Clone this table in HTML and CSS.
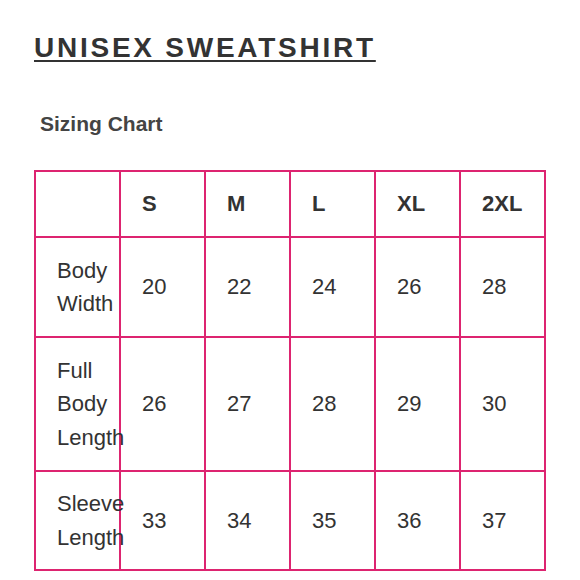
FILE: index.html
```html
<!DOCTYPE html>
<html>
<head>
<meta charset="utf-8">
<link rel="stylesheet" href="styles.css">
</head>
<body>
<div class="page">
  <h1 class="title">UNISEX SWEATSHIRT</h1>
  <h2 class="subtitle">Sizing Chart</h2>
  <table class="chart">
    <tr class="head">
      <td></td><td>S</td><td>M</td><td>L</td><td>XL</td><td>2XL</td>
    </tr>
    <tr class="r1">
      <td class="label">Body<br>Width</td><td>20</td><td>22</td><td>24</td><td>26</td><td>28</td>
    </tr>
    <tr class="r2">
      <td class="label">Full<br>Body<br>Length</td><td>26</td><td>27</td><td>28</td><td>29</td><td>30</td>
    </tr>
    <tr class="r3">
      <td class="label">Sleeve<br>Length</td><td>33</td><td>34</td><td>35</td><td>36</td><td>37</td>
    </tr>
  </table>
</div>
</body>
</html>
```

FILE: styles.css
```css
html, body {
  margin: 0;
  padding: 0;
  background: #ffffff;
}

.page {
  padding: 32px 0 0 34px;
  font-family: "Liberation Sans", Arial, sans-serif;
  color: #333333;
}

.title {
  margin: 0;
  font-size: 28px;
  line-height: 32px;
  font-weight: bold;
  letter-spacing: 2.75px;
  text-decoration: underline;
  text-decoration-thickness: 2px;
  text-underline-offset: 3px;
  color: #333333;
}

.subtitle {
  margin: 48px 0 0 6px;
  font-size: 21px;
  line-height: 24px;
  font-weight: bold;
  color: #444444;
}

.chart {
  margin-top: 34px;
  border-collapse: collapse;
  table-layout: fixed;
  width: 512px;
}

.chart td {
  border: 2px solid #dd2470;
  padding: 0 0 0 21px;
  font-size: 22px;
  line-height: 33.5px;
  vertical-align: middle;
  white-space: nowrap;
  overflow: visible;
  color: #333333;
}

.head td {
  font-weight: bold;
  height: 64px;
}

.r1 td {
  height: 98px;
}

.r2 td {
  height: 132px;
}

.r3 td {
  height: 97px;
}
```
